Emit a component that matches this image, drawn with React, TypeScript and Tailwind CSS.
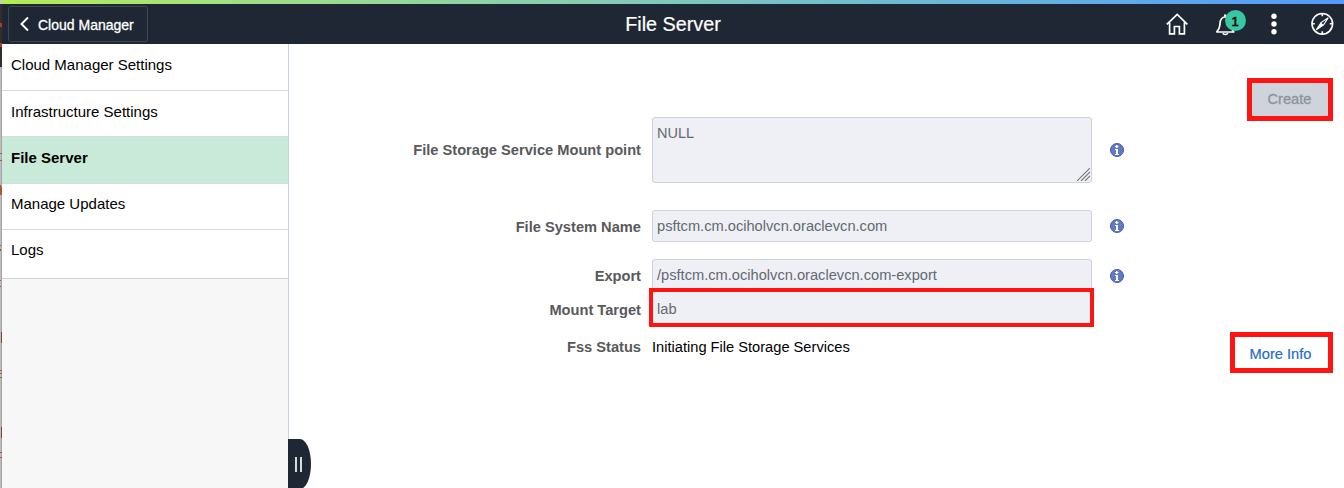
import type { ReactNode } from "react";

const menu = [
  { label: "Cloud Manager Settings", cls: "h-[47px] pt-[9px] border-[#d6dade]" },
  { label: "Infrastructure Settings", cls: "h-[46px] pt-[9px] border-[#d6dade]" },
  { label: "File Server", cls: "h-[47px] pt-[9px] border-[#d6dade] bg-[#c9ead8] font-bold" },
  { label: "Manage Updates", cls: "h-[46px] pt-[8px] border-[#d6dade]" },
  { label: "Logs", cls: "h-[49px] pt-[8px] border-[#cbd3dd]" },
];

function InfoIcon() {
  return (
    <svg className="ml-[18px] h-[14px] w-[14px] shrink-0" viewBox="0 0 14 14">
      <circle cx="7" cy="7" r="6.5" fill="#6279c3" stroke="#4559a8" />
      <path d="M6 2h1.500v1H8.500v1H7.500v1H6V4H5V3h1zM5 6h3v5h1v1H5v-1h1V7H5z" fill="#fff" />
    </svg>
  );
}

function Row({ label, cls, labelCls = "", children }: { label: string; cls: string; labelCls?: string; children: ReactNode }) {
  return (
    <div className={"flex items-center text-[14.650px] " + cls}>
      <div className={"mr-[11px] w-[352px] shrink-0 text-right font-bold whitespace-nowrap text-[#58595b] " + labelCls}>{label}</div>
      {children}
    </div>
  );
}

function Strip() {
  return (
    <svg className="h-[488px] w-[2px] shrink-0" viewBox="0 0 2 488" preserveAspectRatio="none">
      <rect width="2" height="488" fill="#bcbcbc" />
      <rect width="2" height="4" fill="#c9c8cc" />
      <rect y="4" width="2" height="63" fill="#332d2c" />
      <path d="M0 23h2v4H0zM0 43h2v4H0z" fill="#b53732" />
      <path d="M1 67h1v421H1z" fill="#a5a5a5" />
      <path d="M0 153h2v1H0zM0 160h2v1H0zM0 185h1v10H0zM1 187h1v8H1zM0 245h1v1H0zM0 249h1v2H0zM0 280h1v1H0zM0 286h1v1H0zM0 370h2v1H0zM0 373h2v1H0zM0 377h2v1H0zM0 452h2v1H0zM0 457h2v1H0z" fill="#ad5938" />
      <path d="M1 332h1v11H1zM1 427h1v11H1z" fill="#7d4936" />
    </svg>
  );
}

export default function App() {
  return (
    <div className="flex h-[488px] w-[1344px] overflow-hidden bg-white font-['Liberation_Sans',Arial,sans-serif] text-[15px] leading-[24px] text-black">
      <Strip />
      <div className="flex min-w-0 flex-1 flex-col">
        <div className="h-[4px] shrink-0 bg-linear-to-r from-[#b4ec51] to-[#539afb]" />
        <header className="grid h-[40px] shrink-0 grid-cols-[1fr_auto_1fr] items-center bg-[#1e2733] text-white">
          <button className="ml-[6px] flex h-[36px] w-[140px] items-center rounded-[3px] border border-[#3d4854] pt-[2px] pl-[11px] text-[14px] [-webkit-text-stroke:0.3px_white]">
            <svg className="-mt-[2px] mr-[9px] h-[14px] w-[9px]" viewBox="0 0 9 14" fill="none" stroke="white" strokeWidth="2">
              <path d="M8 .5L1.500 7 8 13.500" />
            </svg>
            Cloud Manager
          </button>
          <h1 className="text-[19.800px] [-webkit-text-stroke:0.2px_white]">File Server</h1>
          <div className="flex items-center justify-end">
            <svg className="h-[24px] w-[24px]" viewBox="0 0 24 24" fill="none" stroke="white" strokeWidth="1.700">
              <path d="M1.800 12.400L12.200 2.400l10.200 10M4.600 10.500v11.300h4.800v-7.300h5v7.300h5V10.500" />
            </svg>
            <div className="relative ml-[25px] h-[24px] w-[24px]">
              <svg className="h-[24px] w-[24px]" viewBox="0 0 24 24" fill="none" stroke="white" strokeWidth="1.700">
                <path d="M2.200 20h18.200M2.500 19.800c2.700-2.400 3.300-4.300 3.500-8 .2-4 1.800-6.800 5.300-6.800s5 2.800 5.200 6.800c.2 3.700.9 5.600 3.600 8M10 3.300h2.500M8.800 21.200c.7 1.700 4.300 1.700 5 0" />
              </svg>
              <span className="absolute top-[-2px] left-[11px] flex h-[21px] w-[21px] items-center justify-center rounded-full bg-[#38c6a3] pt-[2px] pr-[1px] text-[13px] leading-none text-black [-webkit-text-stroke:0.500px_black]">1</span>
            </div>
            <svg className="ml-[32px] h-[22px] w-[8px]" viewBox="0 0 8 22" fill="white">
              <circle cx="4" cy="3.200" r="2.700" />
              <circle cx="4" cy="11" r="2.700" />
              <circle cx="4" cy="18.800" r="2.700" />
            </svg>
            <svg className="mr-[10px] ml-[32px] h-[24px] w-[24px]" viewBox="0 0 24 24" fill="none" stroke="white" strokeWidth="1.600">
              <circle cx="12.300" cy="11.800" r="10.300" />
              <path d="M12.300 1.500v2.800M12.300 19.300v2.800M2 11.800h2.800M19.800 11.800h2.800" />
              <path d="M18.300 5.700l-4.700 7.200-7.300 5 4.700-7.300z" strokeWidth="1.100" />
              <path d="M6.300 17.900l4.700-7.300 2.600 2.300z" fill="white" stroke="none" />
            </svg>
          </div>
        </header>

        <div className="flex flex-1">
          <nav className="relative flex w-[287px] shrink-0 flex-col border-r border-[#cbd3dd] bg-[#f7f7f7]">
            {menu.map((m) => (
              <div key={m.label} className={"shrink-0 border-b pl-[9px] " + m.cls + (m.label === "File Server" ? "" : " bg-white")}>
                {m.label}
              </div>
            ))}
            <div className="absolute top-[395px] left-[286px] flex h-[50px] w-[23px] items-center justify-center gap-[3px] rounded-r-[11px_25px] bg-[#1e2733] pt-[1px] pr-[3px]">
              <span className="h-[15px] w-[2px] bg-[#d8dadd]" />
              <span className="h-[15px] w-[2px] bg-[#d8dadd]" />
            </div>
          </nav>

          <main className="flex flex-1 justify-between">
            <section className="flex flex-col pt-[73px]">
              <Row label="File Storage Service Mount point" cls="h-[66px]">
                <div className="flex h-[66px] w-[440px] justify-between rounded-[3px] border border-[#cdd1db] bg-[#eff0f5] pt-[3px] pl-[4px] text-[14.500px] text-[#626a73]">
                  NULL
                  <svg className="mr-[1px] mb-[1px] h-[13px] w-[13px] self-end" viewBox="0 0 13 13" stroke="#77787b" strokeWidth="1.100">
                    <path d="M0 13L13 0M4 13l9-9M8 13l5-5" />
                  </svg>
                </div>
                <InfoIcon />
              </Row>
              <Row label="File System Name" cls="mt-[27px] h-[32px]" labelCls="pt-[2px]">
                <div className="h-[32px] w-[440px] rounded-[3px] border border-[#cdd1db] bg-[#eff0f5] pt-[3px] pl-[4px] text-[#626a73]">psftcm.cm.ociholvcn.oraclevcn.com</div>
                <InfoIcon />
              </Row>
              <Row label="Export" cls="mt-[17px] h-[32px]" labelCls="pt-[2px]">
                <div className="h-[32px] w-[440px] rounded-[3px] border border-[#cdd1db] bg-[#eff0f5] pt-[3px] pl-[4px] text-[#626a73]">/psftcm.cm.ociholvcn.oraclevcn.com-export</div>
                <div className="pt-[2px]">
                  <InfoIcon />
                </div>
              </Row>
              <Row label="Mount Target" cls="relative -mt-[3px] h-[39px]" labelCls="pt-[4px]">
                <div className="-ml-[3px] flex h-[39px] w-[445px] items-center border-[4px] border-[#ff1414] bg-[#eff0f5] pt-[2px] pl-[4px] text-[#626a73]">lab</div>
              </Row>
              <Row label="Fss Status" cls="mt-[8px] h-[24px]">
                <span>Initiating File Storage Services</span>
              </Row>
            </section>
            <aside className="mr-[11px] flex flex-col items-end pt-[34px]">
              <button className="flex h-[43px] w-[86px] items-center justify-center border-[5px] border-[#ff1414] bg-[#cfd3dc] pr-[1px] pb-[2px] text-[14.650px] text-[#8c939c] [-webkit-text-stroke:0.3px_#8c939c]">Create</button>
              <a className="mt-[211px] flex h-[41px] w-[103px] items-center justify-center border-[5px] border-[#ff1414] pt-[2px] pr-[2px] text-[14.650px] text-[#1f6dc5] [-webkit-text-stroke:0.2px_#1f6dc5]">More Info</a>
            </aside>
          </main>
        </div>
      </div>
    </div>
  );
}
